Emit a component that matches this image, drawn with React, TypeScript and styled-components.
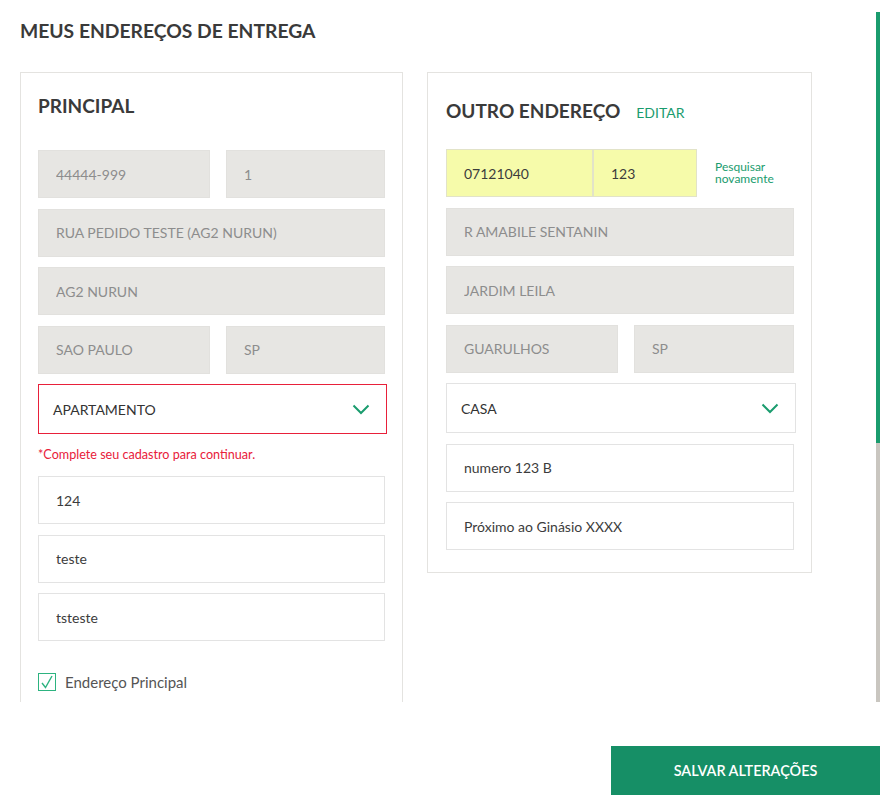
import React from "react";
import styled, { createGlobalStyle } from "styled-components";

const GlobalStyle = createGlobalStyle`
  html, body { margin: 0; padding: 0; background: #fff; }
  body { font-family: Lato, "Open Sans", "Liberation Sans", sans-serif; }
  * { box-sizing: border-box; }
`;

const green = "#1a9c6e";
const red = "#e8203a";

const Page = styled.div`
  width: 887px;
  height: 804px;
  display: flex;
  flex-direction: column;
  padding-right: 7px;
`;

const Viewport = styled.div`
  display: flex;
  height: 702px;
  overflow: hidden;
`;

const Content = styled.div`
  flex: 1;
  padding: 20px 0 0 20px;
`;

const Title = styled.h1`
  margin: 0;
  font-size: 19.3px;
  line-height: 22px;
  font-weight: 700;
  color: #3a3a3a;
  text-transform: uppercase;
`;

const Cards = styled.div`
  display: flex;
  align-items: flex-start;
  gap: 24px;
  margin-top: 30px;
`;

const Card = styled.section<{ $w: number; $pl: number; $pb: number }>`
  width: ${(p) => p.$w}px;
  border: 1px solid #e4e3e0;
  padding: 0 17px ${(p) => p.$pb}px ${(p) => p.$pl}px;
  display: flex;
  flex-direction: column;
`;

const CardHeader = styled.div<{ $top: number; $bottom: number }>`
  display: flex;
  align-items: baseline;
  gap: 16px;
  margin: ${(p) => p.$top}px 0 ${(p) => p.$bottom}px;
`;

const CardTitle = styled.h2`
  margin: 0;
  font-size: 19px;
  line-height: 22px;
  font-weight: 700;
  color: #3a3a3a;
`;

const EditLink = styled.a`
  font-size: 14px;
  color: ${green};
  text-decoration: none;
  cursor: pointer;
`;

const Fields = styled.div`
  display: flex;
  flex-direction: column;
  gap: 10.5px;
`;

const Row = styled.div<{ $gap?: number }>`
  display: flex;
  align-items: center;
  gap: ${(p) => p.$gap ?? 16}px;
`;

const Input = styled.input<{ $w?: number; $variant?: "disabled" | "plain" | "highlight" }>`
  ${(p) => (p.$w ? `width: ${p.$w}px; flex: none;` : "flex: 1 1 auto; width: 100%; min-width: 0;")}
  height: 48px;
  padding: 0 17px;
  font-family: inherit;
  font-size: 14px;
  outline: none;
  border: 1px solid
    ${(p) =>
      p.$variant === "disabled" ? "#e2e1de" : p.$variant === "highlight" ? "#e2e3c8" : "#e3e3e3"};
  background: ${(p) =>
    p.$variant === "disabled" ? "#e7e6e3" : p.$variant === "highlight" ? "#f6fbaa" : "#fff"};
  color: ${(p) => (p.$variant === "disabled" ? "#8d8d8d" : "#3c3c3c")};
  &:disabled {
    -webkit-text-fill-color: #8d8d8d;
    opacity: 1;
  }
`;

const SelectBox = styled.div<{ $error?: boolean }>`
  height: 50px;
  margin-right: -2px;
  border: 1px solid ${(p) => (p.$error ? red : "#e3e3e3")};
  display: flex;
  align-items: center;
  justify-content: space-between;
  padding: 0 16px 0 14px;
  font-size: 14px;
  color: #333;
  text-transform: uppercase;
`;

const ErrorText = styled.p`
  margin: 14px 0 14px;
  font-size: 12.6px;
  line-height: 14px;
  color: ${red};
`;

const SearchAgain = styled.a`
  margin-left: 18px;
  font-size: 12px;
  line-height: 12px;
  color: ${green};
  width: 70px;
  cursor: pointer;
`;

const CheckRow = styled.label`
  display: flex;
  align-items: center;
  gap: 9px;
  margin-top: 32px;
  font-size: 15px;
  color: #555;
`;

const CheckBox = styled.span`
  width: 18px;
  height: 18px;
  border: 1.5px solid #2db380;
  display: flex;
  align-items: center;
  justify-content: center;
`;

const Spacer = styled.div`
  height: 80px;
`;

const ScrollTrack = styled.div`
  width: 4px;
  margin-top: 12px;
  height: 690px;
  background: #c9c6c0;
  display: flex;
  flex-direction: column;
`;

const ScrollThumb = styled.div`
  height: 431px;
  background: ${green};
`;

const Footer = styled.div`
  display: flex;
  justify-content: flex-end;
  margin-top: 44px;
`;

const SaveButton = styled.button`
  width: 269px;
  height: 49px;
  border: none;
  background: #168f66;
  color: #fff;
  font-family: inherit;
  font-size: 14.4px;
  font-weight: 600;
  text-transform: uppercase;
  cursor: pointer;
`;

const Chevron = () => (
  <svg width="18" height="11" viewBox="0 0 18 11" fill="none">
    <polyline points="1.5,1.5 9,9 16.5,1.5" stroke={green} strokeWidth="2" />
  </svg>
);

const Check = () => (
  <svg width="14" height="14" viewBox="0 0 14 14" fill="none">
    <polyline points="2,8 5.5,12.5 12,1" stroke="#2db380" strokeWidth="1.4" />
  </svg>
);

export default function App() {
  return (
    <>
      <GlobalStyle />
      <Page>
        <Viewport>
          <Content>
            <Title>Meus endereços de entrega</Title>
            <Cards>
              <Card $w={383} $pl={17} $pb={0}>
                <CardHeader $top={22} $bottom={33}>
                  <CardTitle>PRINCIPAL</CardTitle>
                </CardHeader>
                <Fields>
                  <Row>
                    <Input $w={172} $variant="disabled" disabled defaultValue="44444-999" />
                    <Input $variant="disabled" disabled defaultValue="1" />
                  </Row>
                  <Input $variant="disabled" disabled defaultValue="RUA PEDIDO TESTE (AG2 NURUN)" />
                  <Input $variant="disabled" disabled defaultValue="AG2 NURUN" />
                  <Row>
                    <Input $w={172} $variant="disabled" disabled defaultValue="SAO PAULO" />
                    <Input $variant="disabled" disabled defaultValue="SP" />
                  </Row>
                  <SelectBox $error>
                    <span>Apartamento</span>
                    <Chevron />
                  </SelectBox>
                </Fields>
                <ErrorText>*Complete seu cadastro para continuar.</ErrorText>
                <Fields>
                  <Input $variant="plain" defaultValue="124" />
                  <Input $variant="plain" defaultValue="teste" />
                  <Input $variant="plain" defaultValue="tsteste" />
                </Fields>
                <CheckRow>
                  <CheckBox>
                    <Check />
                  </CheckBox>
                  Endereço Principal
                </CheckRow>
                <Spacer />
              </Card>
              <Card $w={385} $pl={18} $pb={22}>
                <CardHeader $top={27} $bottom={27}>
                  <CardTitle>OUTRO ENDEREÇO</CardTitle>
                  <EditLink>EDITAR</EditLink>
                </CardHeader>
                <Fields>
                  <Row $gap={0}>
                    <Input $w={147} $variant="highlight" defaultValue="07121040" />
                    <Input $w={104} $variant="highlight" defaultValue="123" />
                    <SearchAgain>Pesquisar novamente</SearchAgain>
                  </Row>
                  <Input $variant="disabled" disabled defaultValue="R AMABILE SENTANIN" />
                  <Input $variant="disabled" disabled defaultValue="JARDIM LEILA" />
                  <Row>
                    <Input $w={172} $variant="disabled" disabled defaultValue="GUARULHOS" />
                    <Input $variant="disabled" disabled defaultValue="SP" />
                  </Row>
                  <SelectBox>
                    <span>Casa</span>
                    <Chevron />
                  </SelectBox>
                  <Input $variant="plain" defaultValue="numero 123 B" />
                  <Input $variant="plain" defaultValue="Próximo ao Ginásio XXXX" />
                </Fields>
              </Card>
            </Cards>
          </Content>
          <ScrollTrack>
            <ScrollThumb />
          </ScrollTrack>
        </Viewport>
        <Footer>
          <SaveButton>Salvar alterações</SaveButton>
        </Footer>
      </Page>
    </>
  );
}
